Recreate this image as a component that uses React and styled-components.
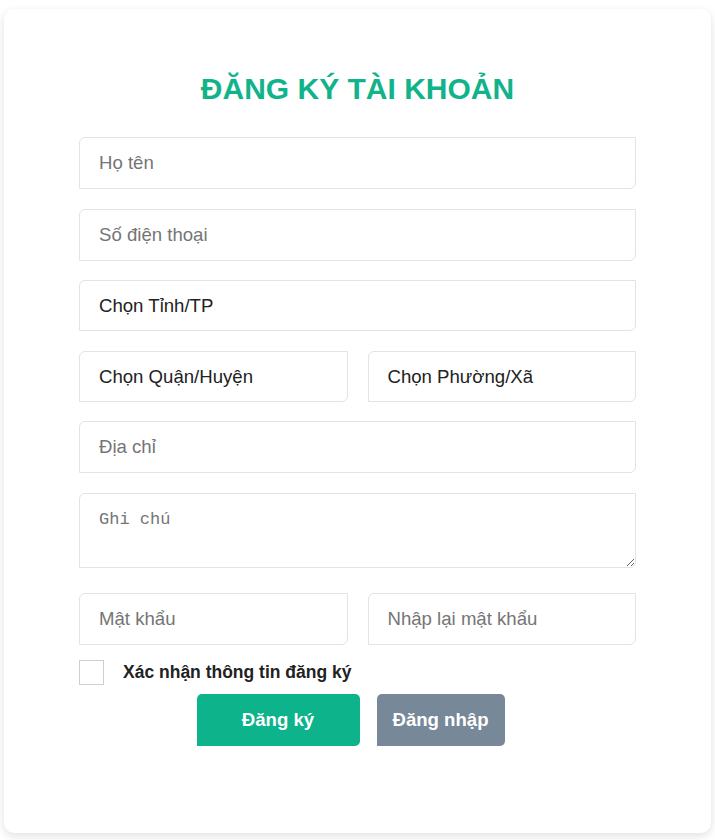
import React from "react";
import styled, { createGlobalStyle } from "styled-components";

const GlobalStyle = createGlobalStyle`
    body {
        margin:0;
        background:#fff;
        font-family:"Liberation Sans", Arial, sans-serif;
    }
`

const Page = styled.div`
    padding:9px 4px 7px;
`

const Card = styled.form`
    background:#fff;
    border-radius:10px;
    box-shadow:0 3px 10px rgba(0,0,0,0.12);
    padding:0 75px 87px;
    display:flex;
    flex-direction:column;
`

const Title = styled.h2`
    margin:63px 0 32px;
    text-align:center;
    color:#10b38a;
    font-size:30px;
    line-height:33px;
    font-weight:700;
`

const Row = styled.div`
    display:grid;
    grid-template-columns:1fr 1fr;
    gap:20px;
    margin-bottom:${p => p.$gap || 20}px;
`

const fieldStyles = `
    box-sizing:border-box;
    width:100%;
    border:1px solid #e3e3e3;
    border-radius:6px 0 6px 0;
    background:#fff;
    padding:0 19px;
    font-size:18.6px;
    font-family:"Liberation Sans", Arial, sans-serif;
    outline:none;
`

const Input = styled.input`
    ${fieldStyles}
    height:${p => p.$h || 52}px;
    margin-bottom:${p => p.$mb ?? 20}px;
    &::placeholder { color:#757575; }
`

const Select = styled.select`
    ${fieldStyles}
    height:${p => p.$h || 52}px;
    margin-bottom:${p => p.$mb ?? 20}px;
    appearance:none;
    color:#222;
    padding-left:19px;
`

const TextArea = styled.textarea`
    ${fieldStyles}
    display:block;
    height:75px;
    padding:16px 19px;
    font-family:"Liberation Mono", "DejaVu Sans Mono", monospace;
    font-size:17px;
    margin-bottom:25px;
    &::placeholder { color:#757575; }
`

const CheckRow = styled.label`
    display:flex;
    align-items:center;
    gap:19px;
    margin-bottom:9px;
    font-weight:700;
    font-size:17.5px;
    color:#222;
`

const Box = styled.span`
    width:25px;
    height:25px;
    box-sizing:border-box;
    border:1px solid #cfcfcf;
    background:#fff;
`

const Actions = styled.div`
    display:flex;
    justify-content:center;
    gap:17px;
    padding-right:14px;
`

const Button = styled.button`
    height:52px;
    border:none;
    border-radius:5px 5px 5px 0;
    background:${p => p.$muted ? "#778899" : "#0db38b"};
    color:#fff;
    font-weight:700;
    font-size:18.6px;
    font-family:"Liberation Sans", Arial, sans-serif;
    padding:0 ${p => p.$muted ? 14 : 44}px;
    min-width:${p => p.$muted ? 128 : 163}px;
`

export default function App(){
    return (
        <Page>
            <GlobalStyle />
            <Card onSubmit={e => e.preventDefault()}>
                <Title>ĐĂNG KÝ TÀI KHOẢN</Title>
                <Input placeholder="Họ tên" />
                <Input placeholder="Số điện thoại" $mb={19} />
                <Select defaultValue="" $h={51}>
                    <option value="">Chọn Tỉnh/TP</option>
                </Select>
                <Row $gap={19}>
                    <Select defaultValue="" $h={51} $mb={0}>
                        <option value="">Chọn Quận/Huyện</option>
                    </Select>
                    <Select defaultValue="" $h={51} $mb={0}>
                        <option value="">Chọn Phường/Xã</option>
                    </Select>
                </Row>
                <Input placeholder="Địa chỉ" />
                <TextArea placeholder="Ghi chú" />
                <Row $gap={15}>
                    <Input type="password" placeholder="Mật khẩu" $mb={0} />
                    <Input type="password" placeholder="Nhập lại mật khẩu" $mb={0} />
                </Row>
                <CheckRow>
                    <Box />
                    Xác nhận thông tin đăng ký
                </CheckRow>
                <Actions>
                    <Button type="submit">Đăng ký</Button>
                    <Button type="button" $muted>Đăng nhập</Button>
                </Actions>
            </Card>
        </Page>
    )
}
